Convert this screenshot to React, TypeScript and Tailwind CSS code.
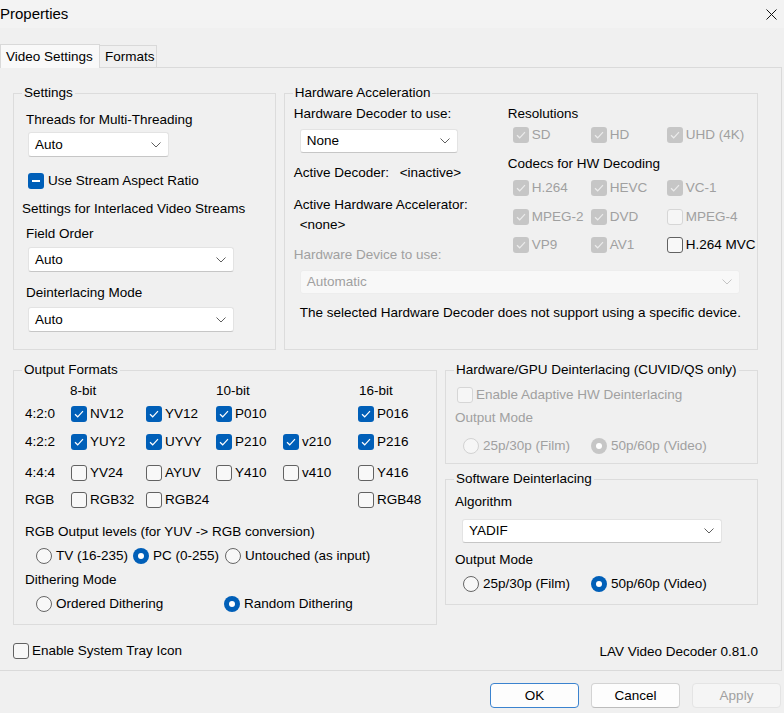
import type { ReactNode } from 'react';

type Mark = 'on' | 'off' | 'mixed';

const FORMAT_COLS = 'grid grid-cols-[46px_75px_70px_67px_75px_auto] items-center';

function Box({ mark = 'off', disabled = false }: { mark?: Mark; disabled?: boolean }) {
  let look = 'border border-[#626262] bg-[#f8f8f8]';
  if (mark !== 'off') look = disabled ? 'bg-[#c6c6c6]' : 'bg-[#005fb8]';
  else if (disabled) look = 'border border-[#d6d6d6] bg-[#f6f6f6]';
  return (
    <span className={`w-4 h-4 shrink-0 rounded-[3px] flex items-center justify-center ${look}`}>
      {mark === 'on' && (
        <svg width="10" height="8" viewBox="0 0 10 8">
          <path d="M1 4.2 3.7 6.8 9 1.2" fill="none" stroke={disabled ? '#ececec' : '#fff'} strokeWidth="1.2" />
        </svg>
      )}
      {mark === 'mixed' && <span className="w-2 h-[1.5px] bg-white" />}
    </span>
  );
}

function Check({ label, mark, disabled, className = '' }: { label: string; mark?: Mark; disabled?: boolean; className?: string }) {
  return (
    <label className={`flex items-center gap-[3px] h-4 whitespace-nowrap ${disabled ? 'text-[#a0a0a0]' : ''} ${className}`}>
      <Box mark={mark} disabled={disabled} />
      <span>{label}</span>
    </label>
  );
}

function Radio({ label, on = false, disabled = false, className = '' }: { label: string; on?: boolean; disabled?: boolean; className?: string }) {
  let dot = 'border border-[#666] bg-[#f8f8f8]';
  if (on) dot = disabled ? 'bg-[#c6c6c6]' : 'bg-[#005fb8]';
  else if (disabled) dot = 'border border-[#d2d2d2] bg-[#f6f6f6]';
  return (
    <label className={`flex items-center gap-[4px] h-4 whitespace-nowrap ${disabled ? 'text-[#a0a0a0]' : ''} ${className}`}>
      <span className={`w-4 h-4 shrink-0 rounded-full flex items-center justify-center ${dot}`}>
        {on && <span className="w-[6px] h-[6px] rounded-full bg-white" />}
      </span>
      <span>{label}</span>
    </label>
  );
}

function Select({ value, disabled = false, className = '' }: { value: string; disabled?: boolean; className?: string }) {
  return (
    <div
      className={`flex items-center justify-between rounded-[3px] border pl-[6px] pr-[7px] ${
        disabled ? 'bg-[#f8f8f8] border-[#ededed] text-[#a0a0a0]' : 'bg-white border-[#e3e3e3] border-b-[#c6c6c6]'
      } ${className}`}
    >
      <span>{value}</span>
      <svg width="10" height="6" viewBox="0 0 10 6">
        <path d="M0.5 0.5 5 5 9.5 0.5" fill="none" stroke={disabled ? '#c4c4c4' : '#5f5f5f'} strokeWidth="1" />
      </svg>
    </div>
  );
}

function Group({ title, className = '', children }: { title: string; className?: string; children: ReactNode }) {
  return (
    <fieldset className={`border border-[#dcdcdc] p-0 m-0 min-w-0 ${className}`}>
      <legend className="ml-[8px] px-[2px] leading-4">{title}</legend>
      {children}
    </fieldset>
  );
}

function Button({ children, primary = false, disabled = false }: { children: ReactNode; primary?: boolean; disabled?: boolean }) {
  let look = 'bg-[#fdfdfd] border-[#d3d3d3] border-b-[#bcbcbc]';
  if (primary) look = 'bg-[#fdfdfd] border-[#3b83cf]';
  if (disabled) look = 'bg-[#f5f5f5] border-[#e4e4e4] text-[#a0a0a0]';
  return <button className={`w-[89px] h-[25px] rounded-[4px] border ${look}`}>{children}</button>;
}

export default function App() {
  return (
    <div className="w-[784px] h-[713px] overflow-hidden bg-[#f0f0f0] text-black text-[13.5px] leading-4 font-['Liberation_Sans',Arial,sans-serif] flex flex-col">
      {/* title bar */}
      <div className="h-[28px] flex items-center justify-between bg-[#f3f3f3] pr-[7px]">
        <span className="text-[15px]">Properties</span>
        <svg width="11" height="11" viewBox="0 0 11 11">
          <path d="M0.5 0.5 10.5 10.5M10.5 0.5 0.5 10.5" stroke="#111" strokeWidth="1" />
        </svg>
      </div>

      {/* tabs */}
      <div className="h-[39px] flex items-end relative z-10">
        <div className="w-[100px] h-[24px] -mb-px bg-[#f9f9f9] border border-b-0 border-[#d9d9d9] flex items-center pl-[5px]">
          Video Settings
        </div>
        <div className="w-[57px] h-[22px] bg-[#f0f0f0] border-t border-r border-[#d9d9d9] flex items-center pl-[5px]">
          Formats
        </div>
      </div>

      {/* tab page */}
      <div className="mr-[2px] border border-l-0 border-[#dadada] pt-[17px] pl-[13px] pr-[23px] pb-[10px]">
        <div className="flex gap-[8px]">
          <Group title="Settings" className="w-[263px] h-[265px]">
            <div className="pl-[12px] pt-[11px] flex flex-col items-start">
              <span>Threads for Multi-Threading</span>
              <Select value="Auto" className="mt-[4px] ml-[2px] w-[141px] h-[25px]" />
              <label className="mt-[16px] ml-[2px] flex items-center gap-[4px] h-4">
                <Box mark="mixed" />
                <span>Use Stream Aspect Ratio</span>
              </label>
              <span className="mt-[12px] -ml-[4px]">Settings for Interlaced Video Streams</span>
              <span className="mt-[9px]">Field Order</span>
              <Select value="Auto" className="mt-[5px] ml-[2px] w-[206px] h-[25px]" />
              <span className="mt-[13px]">Deinterlacing Mode</span>
              <Select value="Auto" className="mt-[6px] ml-[2px] w-[206px] h-[25px]" />
            </div>
          </Group>

          <Group title="Hardware Acceleration" className="w-[475px] h-[265px]">
            <div className="pl-[9px] pt-[5px]">
              <div className="flex">
                <div className="w-[214px] flex flex-col items-start">
                  <span>Hardware Decoder to use:</span>
                  <Select value="None" className="mt-[7px] ml-[6px] w-[158px] h-[24px]" />
                  <div className="mt-[12px] flex">
                    <span className="w-[106px]">Active Decoder:</span>
                    <span>&lt;inactive&gt;</span>
                  </div>
                  <span className="mt-[16px]">Active Hardware Accelerator:</span>
                  <span className="mt-[4px] ml-[6px]">&lt;none&gt;</span>
                  <span className="mt-[14px] text-[#a0a0a0]">Hardware Device to use:</span>
                </div>
                <div className="flex flex-col items-start">
                  <span>Resolutions</span>
                  <div className="mt-[5px] ml-[5px] grid grid-cols-[78px_76px_auto]">
                    <Check label="SD" mark="on" disabled />
                    <Check label="HD" mark="on" disabled />
                    <Check label="UHD (4K)" mark="on" disabled />
                  </div>
                  <span className="mt-[13px]">Codecs for HW Decoding</span>
                  <div className="mt-[8px] ml-[5px] grid grid-cols-[78px_76px_auto]">
                    <Check label="H.264" mark="on" disabled />
                    <Check label="HEVC" mark="on" disabled />
                    <Check label="VC-1" mark="on" disabled />
                  </div>
                  <div className="mt-[13px] ml-[5px] grid grid-cols-[78px_76px_auto]">
                    <Check label="MPEG-2" mark="on" disabled />
                    <Check label="DVD" mark="on" disabled />
                    <Check label="MPEG-4" disabled />
                  </div>
                  <div className="mt-[12px] ml-[5px] grid grid-cols-[78px_76px_auto]">
                    <Check label="VP9" mark="on" disabled />
                    <Check label="AV1" mark="on" disabled />
                    <Check label="H.264 MVC" />
                  </div>
                </div>
              </div>
              <Select value="Automatic" disabled className="mt-[7px] ml-[6px] w-[440px] h-[24px]" />
              <p className="mt-[11px] ml-[6px]">The selected Hardware Decoder does not support using a specific device.</p>
            </div>
          </Group>
        </div>

        <div className="mt-[12px] flex items-start gap-[8px]">
          <Group title="Output Formats" className="w-[424px] h-[263px]">
            <div className="pl-[11px] pt-[5px] flex flex-col">
              <div className={FORMAT_COLS}>
                <span />
                <span className="-ml-px">8-bit</span>
                <span />
                <span>10-bit</span>
                <span />
                <span className="ml-px">16-bit</span>
              </div>
              <div className={`${FORMAT_COLS} mt-[7px]`}>
                <span>4:2:0</span>
                <Check label="NV12" mark="on" />
                <Check label="YV12" mark="on" />
                <Check label="P010" mark="on" />
                <span />
                <Check label="P016" mark="on" />
              </div>
              <div className={`${FORMAT_COLS} mt-[12px]`}>
                <span>4:2:2</span>
                <Check label="YUY2" mark="on" />
                <Check label="UYVY" mark="on" />
                <Check label="P210" mark="on" />
                <Check label="v210" mark="on" />
                <Check label="P216" mark="on" />
              </div>
              <div className={`${FORMAT_COLS} mt-[15px]`}>
                <span>4:4:4</span>
                <Check label="YV24" />
                <Check label="AYUV" />
                <Check label="Y410" />
                <Check label="v410" />
                <Check label="Y416" />
              </div>
              <div className={`${FORMAT_COLS} mt-[11px]`}>
                <span>RGB</span>
                <Check label="RGB32" />
                <Check label="RGB24" />
                <span />
                <span />
                <Check label="RGB48" />
              </div>
              <span className="mt-[16px]">RGB Output levels (for YUV -&gt; RGB conversion)</span>
              <div className="mt-[8px] ml-[11px] flex">
                <Radio label="TV (16-235)" className="w-[97px]" />
                <Radio label="PC (0-255)" on className="w-[92px]" />
                <Radio label="Untouched (as input)" />
              </div>
              <span className="mt-[8px]">Dithering Mode</span>
              <div className="mt-[8px] ml-[11px] flex">
                <Radio label="Ordered Dithering" className="w-[188px]" />
                <Radio label="Random Dithering" on />
              </div>
            </div>
          </Group>

          <div className="w-[313px] flex flex-col">
            <Group title="Hardware/GPU Deinterlacing (CUVID/QS only)" className="h-[102px]">
              <div className="pt-[9px] flex flex-col items-start">
                <Check label="Enable Adaptive HW Deinterlacing" disabled className="ml-[11px]" />
                <span className="mt-[7px] ml-[9px] text-[#a0a0a0]">Output Mode</span>
                <div className="mt-[12px] ml-[17px] flex">
                  <Radio label="25p/30p (Film)" disabled className="w-[128px]" />
                  <Radio label="50p/60p (Video)" on disabled />
                </div>
              </div>
            </Group>
            <Group title="Software Deinterlacing" className="mt-[7px] h-[134px]">
              <div className="pt-[7px] flex flex-col items-start">
                <span className="ml-[9px]">Algorithm</span>
                <Select value="YADIF" className="mt-[9px] ml-[16px] w-[260px] h-[24px]" />
                <span className="mt-[9px] ml-[9px]">Output Mode</span>
                <div className="mt-[8px] ml-[17px] flex">
                  <Radio label="25p/30p (Film)" className="w-[128px]" />
                  <Radio label="50p/60p (Video)" on />
                </div>
              </div>
            </Group>
          </div>
        </div>

        <div className="mt-[16px] flex items-center justify-between">
          <Check label="Enable System Tray Icon" />
          <span className="mt-[3px]">LAV Video Decoder 0.81.0</span>
        </div>
      </div>

      {/* dialog buttons */}
      <div className="mt-[12px] pr-[3px] flex justify-end gap-[12px]">
        <Button primary>OK</Button>
        <Button>Cancel</Button>
        <Button disabled>Apply</Button>
      </div>
    </div>
  );
}
